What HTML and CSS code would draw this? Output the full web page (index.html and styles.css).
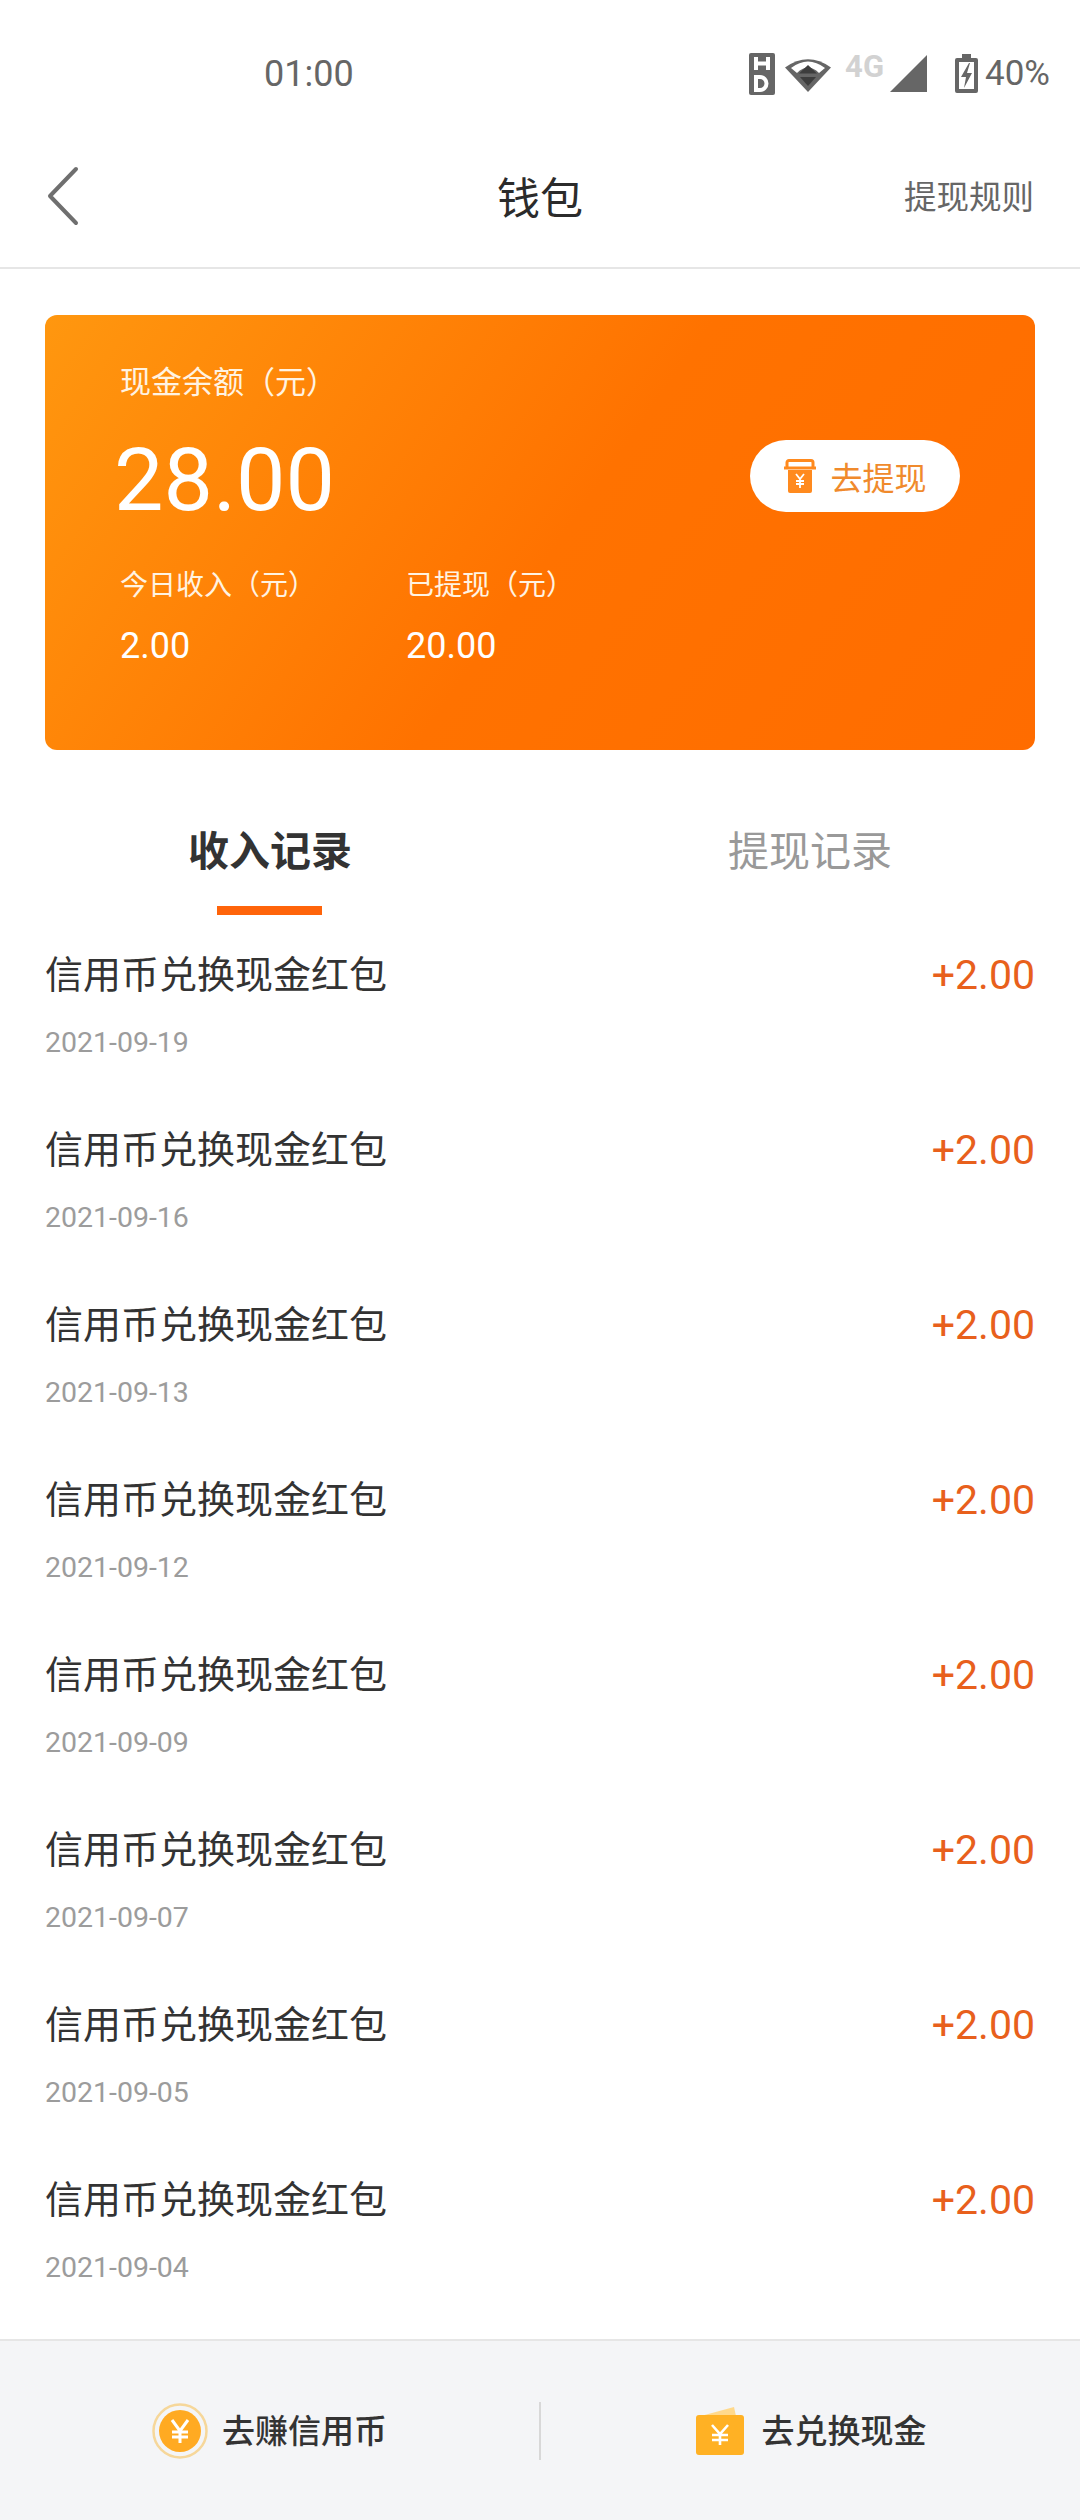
FILE: index.html
```html
<!DOCTYPE html>
<html lang="zh-CN">
<head>
  <meta charset="UTF-8" />
  <title>钱包</title>
  <link rel="stylesheet" href="styles.css">
</head>
<body>

<div class="screen">
  <!-- Status bar -->
  <div class="status-bar">
    <span class="time">01:00</span>
    <div class="status-icons">
      <svg class="ic-hd" width="26" height="42" viewBox="0 0 26 42">
        <rect width="26" height="42" rx="2" fill="#666"/>
        <path d="M7 4v13M19 4v13M7 10.500h12" stroke="#fff" stroke-width="4" fill="none"/>
        <path d="M7 24h4a6.500 6.500 0 0 1 0 13H7z" stroke="#fff" stroke-width="4" fill="#666"/>
      </svg>
      <svg class="ic-wifi" width="46" height="37" viewBox="0 0 46 37">
        <path d="M0 12.500Q23 -4 46 12.500L23 37z" fill="#666"/>
        <path d="M6 13Q23 0 40 13L34 18Q23 7 12 18z" fill="#fff"/>
        <path d="M23 10l9 8.500H14z" fill="#3d3d3d"/>
        <path d="M23 31l-8-9h16z" fill="#3d3d3d"/>
      </svg>
      <span class="net">4G</span>
      <svg class="ic-signal" width="37" height="37" viewBox="0 0 37 37">
        <path d="M0 37L37 0V37z" fill="#666"/>
      </svg>
      <svg class="ic-batt" width="23" height="39" viewBox="0 0 23 39">
        <path d="M7 0h9v4h5a2 2 0 0 1 2 2v31a2 2 0 0 1-2 2H2a2 2 0 0 1-2-2V6a2 2 0 0 1 2-2h5z" fill="#666"/>
        <path d="M4 8h15v27H4z" fill="#fff"/>
        <path d="M14 9l-8 14h5l-2 11 8-15h-5l3-10z" fill="#666"/>
      </svg>
      <span class="batt-text">40%</span>
    </div>
  </div>

  <!-- Nav -->
  <div class="nav">
    <svg class="back" width="34" height="60" viewBox="0 0 34 60">
      <path d="M30 3L4 30l26 27" stroke="#6f6f6f" stroke-width="4" fill="none" stroke-linecap="round" stroke-linejoin="round"/>
    </svg>
    <h1 class="nav-title">钱包</h1>
    <a class="nav-link">提现规则</a>
  </div>

  <!-- Balance card -->
  <div class="card">
    <div class="card-left">
      <div class="card-label">现金余额（元）</div>
      <div class="card-amount">28.00</div>
      <div class="card-stats">
        <div class="stat">
          <div class="stat-label">今日收入（元）</div>
          <div class="stat-value">2.00</div>
        </div>
        <div class="stat">
          <div class="stat-label">已提现（元）</div>
          <div class="stat-value">20.00</div>
        </div>
      </div>
    </div>
    <a class="withdraw-btn">
      <svg width="34" height="34" viewBox="0 0 34 34">
        <path d="M4 10V3.500a2 2 0 0 1 2-2h22a2 2 0 0 1 2 2V10" stroke="#ff8a1e" stroke-width="3" fill="none"/>
        <path d="M1 9h32" stroke="#ff8a1e" stroke-width="3"/>
        <path d="M5 11h24v21a2 2 0 0 1-2 2H7a2 2 0 0 1-2-2z" fill="#ff8a1e"/>
        <path d="M13 15l4 5 4-5M17 20v9M13 22h8M13 25h8" stroke="#fff" stroke-width="1.800" fill="none"/>
      </svg>
      <span>去提现</span>
    </a>
  </div>

  <!-- Tabs -->
  <div class="tabs">
    <div class="tab active">收入记录</div>
    <div class="tab">提现记录</div>
  </div>

  <!-- Records -->
  <div class="records">
    <div class="record">
      <div class="record-main"><span class="record-title">信用币兑换现金红包</span><span class="record-date">2021-09-19</span></div>
      <span class="record-amount">+2.00</span>
    </div>
    <div class="record">
      <div class="record-main"><span class="record-title">信用币兑换现金红包</span><span class="record-date">2021-09-16</span></div>
      <span class="record-amount">+2.00</span>
    </div>
    <div class="record">
      <div class="record-main"><span class="record-title">信用币兑换现金红包</span><span class="record-date">2021-09-13</span></div>
      <span class="record-amount">+2.00</span>
    </div>
    <div class="record">
      <div class="record-main"><span class="record-title">信用币兑换现金红包</span><span class="record-date">2021-09-12</span></div>
      <span class="record-amount">+2.00</span>
    </div>
    <div class="record">
      <div class="record-main"><span class="record-title">信用币兑换现金红包</span><span class="record-date">2021-09-09</span></div>
      <span class="record-amount">+2.00</span>
    </div>
    <div class="record">
      <div class="record-main"><span class="record-title">信用币兑换现金红包</span><span class="record-date">2021-09-07</span></div>
      <span class="record-amount">+2.00</span>
    </div>
    <div class="record">
      <div class="record-main"><span class="record-title">信用币兑换现金红包</span><span class="record-date">2021-09-05</span></div>
      <span class="record-amount">+2.00</span>
    </div>
    <div class="record">
      <div class="record-main"><span class="record-title">信用币兑换现金红包</span><span class="record-date">2021-09-04</span></div>
      <span class="record-amount">+2.00</span>
    </div>
  </div>

  <!-- Bottom bar -->
  <div class="bottom-bar">
    <a class="bottom-item">
      <svg width="56" height="56" viewBox="0 0 56 56">
        <circle cx="28" cy="28" r="26.500" fill="none" stroke="#f6d79a" stroke-width="2.500"/>
        <circle cx="28" cy="28" r="21" fill="#ffaa22"/>
        <path d="M20 17l8 11 8-11M28 28v12M20 29h16M20 34h16" stroke="#fff" stroke-width="3" fill="none"/>
      </svg>
      <span>去赚信用币</span>
    </a>
    <div class="bottom-divider"></div>
    <a class="bottom-item wallet">
      <svg width="50" height="50" viewBox="0 0 50 50">
        <path d="M6 10L39 1l2 9z" fill="#ffd98c"/>
        <rect x="1" y="9" width="48" height="40" rx="3" fill="#ffb124"/>
        <path d="M17 19l8 9 8-9M25 28v11M17 29h16M17 34h16" stroke="#fff" stroke-width="2.600" fill="none"/>
      </svg>
      <span>去兑换现金</span>
    </a>
  </div>
</div>

</body>
</html>
```

FILE: styles.css
```css
* { margin: 0; padding: 0; box-sizing: border-box; }

body {
  font-family: Roboto, 'Noto Sans CJK SC', sans-serif;
  background: #fff;
  color: #333;
}

.screen {
  width: 1080px;
  height: 2520px;
  display: flex;
  flex-direction: column;
  overflow: hidden;
}

/* Status bar */
.status-bar {
  height: 125px;
  display: flex;
  align-items: center;
  justify-content: space-between;
  padding: 22px 30px 0 264px;
  flex-shrink: 0;
}

.time {
  font-size: 36px;
  color: #666;
}

.status-icons {
  display: flex;
  align-items: center;
}

.ic-hd { margin-right: 10px; }
.ic-wifi { margin-right: 14px; }
.net {
  font-size: 31px;
  font-weight: 700;
  color: #d2d2d2;
  margin: -14px 6px 0 0;
}
.ic-signal { margin-right: 28px; }
.ic-batt { margin-right: 7px; }
.batt-text {
  font-size: 35px;
  color: #666;
}

/* Nav */
.nav {
  height: 144px;
  display: flex;
  align-items: center;
  justify-content: space-between;
  padding: 0 46px;
  border-bottom: 2px solid #e6e6e6;
  position: relative;
  flex-shrink: 0;
}

.nav-title {
  font-size: 43px;
  font-weight: 400;
  color: #2b2b2b;
  position: absolute;
  left: 0;
  right: 0;
  text-align: center;
  padding-bottom: 3px;
  pointer-events: none;
}

.nav-link {
  font-size: 32.500px;
  color: #666;
  padding-bottom: 3px;
}

/* Card */
.card {
  margin: 46px 45px 0;
  height: 435px;
  flex-shrink: 0;
  border-radius: 12px;
  background: linear-gradient(125deg, #ff970f 0%, #ff7200 52%, #ff6c00 100%);
  display: flex;
  align-items: flex-start;
  justify-content: space-between;
  padding: 48px 75px 0 75px;
  color: #fff;
}

.card-label {
  font-size: 31px;
  line-height: 40px;
  color: #fff3e2;
  margin-bottom: 24px;
}

.card-amount {
  font-size: 88px;
  line-height: 106px;
  margin-left: -6px;
  margin-bottom: 33px;
}

.card-stats {
  display: flex;
}

.stat {
  width: 286px;
}

.stat-label {
  font-size: 28px;
  line-height: 40px;
  color: #fff3e2;
  margin-bottom: 20px;
}

.stat-value {
  font-size: 36px;
  line-height: 40px;
}

.withdraw-btn {
  width: 210px;
  height: 72px;
  background: #fff;
  border-radius: 36px;
  display: flex;
  align-items: center;
  justify-content: center;
  gap: 13px;
  font-size: 32px;
  color: #f08a2c;
  margin-top: 77px;
}

/* Tabs */
.tabs {
  display: flex;
  margin-top: 38px;
  flex-shrink: 0;
}

.tab {
  width: 540px;
  height: 126px;
  padding-top: 38px;
  text-align: center;
  font-size: 41px;
  line-height: 52px;
  color: #999;
  position: relative;
}

.tab.active {
  font-weight: 700;
  color: #333;
}

.tab.active::after {
  content: "";
  position: absolute;
  left: 217px;
  bottom: -1px;
  width: 105px;
  height: 9px;
  background: #ff640a;
}

/* Records */
.records {
  flex: 1;
  padding: 0 45px;
}

.record {
  height: 175px;
  display: flex;
  justify-content: space-between;
  padding-top: 36px;
}

.record-main {
  display: flex;
  flex-direction: column;
}

.record-title {
  font-size: 38px;
  line-height: 50px;
  color: #333;
}

.record-date {
  font-size: 28.500px;
  line-height: 36px;
  color: #9c9c9c;
  margin-top: 25px;
}

.record-amount {
  font-size: 41px;
  line-height: 50px;
  color: #e8601c;
}

/* Bottom bar */
.bottom-bar {
  height: 181px;
  flex-shrink: 0;
  background: #f4f5f7;
  border-top: 2px solid #e6e6e6;
  display: flex;
  align-items: center;
}

.bottom-item {
  flex: 1;
  display: flex;
  align-items: center;
  justify-content: center;
  gap: 14px;
  font-size: 33px;
  font-weight: 500;
  color: #333;
}

.bottom-item span {
  padding-bottom: 4px;
}

.bottom-item.wallet {
  gap: 17px;
}

.bottom-divider {
  width: 2px;
  height: 58px;
  background: #d8d8d8;
}
```
